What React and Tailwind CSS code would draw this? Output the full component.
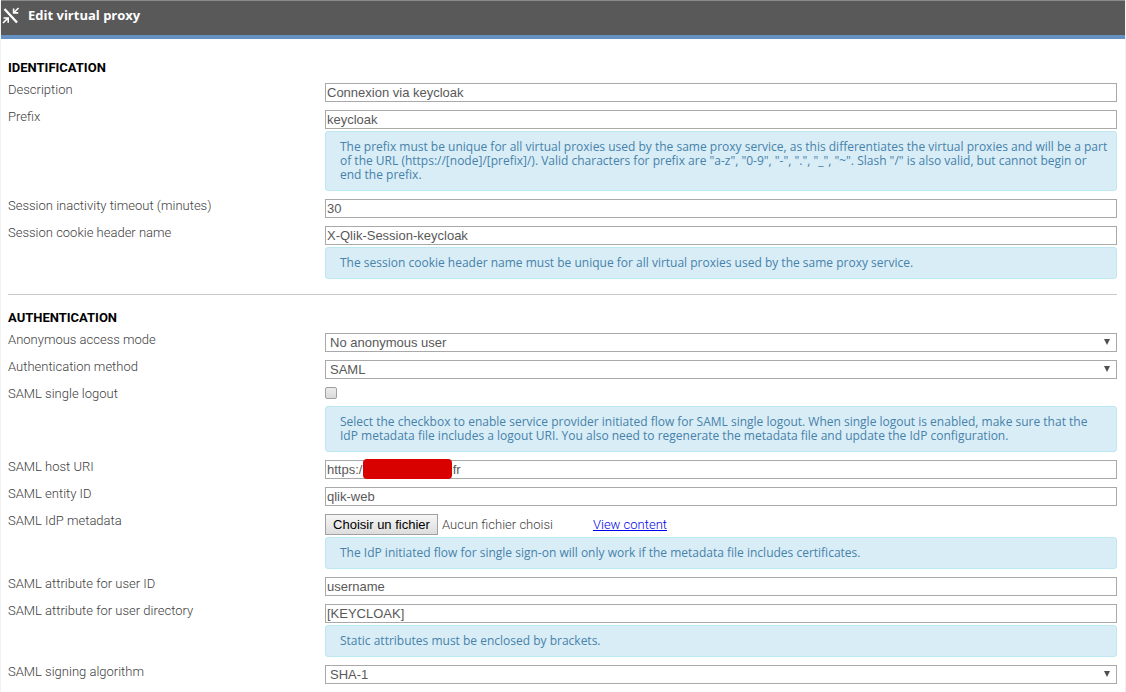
import { useState } from 'react';

const inputClass =
    "block w-full h-[19px] px-px border border-[#a9a9a9] bg-white font-['Liberation_Sans',Arial,sans-serif] text-[13px] leading-[17px] text-[#595959]";

const CollapseIcon = () => (
    <svg viewBox="0 0 18 18" className="w-[18px] h-[18px] shrink-0" fill="none" stroke="white" aria-hidden="true">
        <path d="M2.5 2 L15 15.5" strokeWidth="2.4" />
        <path d="M16.5 1 L12.5 5 M11.6 1.5 V5.9 H16.2" strokeWidth="1.6" />
        <path d="M1 16 L5.5 11.5 M1.5 11 H6.2 V15.8" strokeWidth="1.6" />
    </svg>
);

const Help = ({ children }) => (
    <p className="mt-0.5 pl-3.5 pr-2 py-2 border border-[#bce8f1] rounded-[3px] bg-[#d9edf7] font-['Open_Sans',sans-serif] text-[12px] font-normal leading-[14px] text-[#4682a9]">
        {children}
    </p>
);

const Row = ({ id, label, help, children }) => (
    <div className="flex items-start">
        <label htmlFor={id} className="w-[317px] shrink-0 leading-[14px]">{label}</label>
        <div className="grow min-w-0">
            {children}
            {help && <Help>{help}</Help>}
        </div>
    </div>
);

const TextField = ({ id, label, value, help }) => (
    <Row id={id} label={label} help={help}>
        <input id={id} type="text" defaultValue={value} className={inputClass} />
    </Row>
);

const SelectField = ({ id, label, options }) => (
    <Row id={id} label={label}>
        <div className="relative">
            <select
                id={id}
                className="block w-full h-[19px] pl-1 pr-6 appearance-none border border-[#a9a9a9] bg-white font-['Liberation_Sans',Arial,sans-serif] text-[13px] leading-[17px] text-[#595959]"
            >
                {options.map((option) => (
                    <option key={option}>{option}</option>
                ))}
            </select>
            <svg viewBox="0 0 6 6" className="absolute right-[7px] top-1.5 w-1.5 h-1.5 pointer-events-none" fill="#505050" aria-hidden="true">
                <path d="M0 0 H6 L3 6 Z" />
            </svg>
        </div>
    </Row>
);

const Section = ({ title, children }) => (
    <section>
        <h2 className="mb-2 text-[13px] leading-[14px] font-bold text-black uppercase">{title}</h2>
        <div className="flex flex-col gap-2">{children}</div>
    </section>
);

const App = () => {
    const [logout, setLogout] = useState(false);

    return (
        <div className="min-h-screen bg-white border-x border-[#f2f2f2] font-[Roboto,sans-serif] text-[13px] font-light text-[#404040]">
            <header className="flex items-center gap-2 h-[39px] pl-px border-t border-t-[#8c8c8c] border-b-4 border-b-[#6490c2] bg-[#595959] text-white">
                <button type="button" aria-label="Collapse" className="flex items-center pb-1">
                    <CollapseIcon />
                </button>
                <h1 className="pb-1 font-['Open_Sans',sans-serif] text-[13px] font-bold">Edit virtual proxy</h1>
            </header>

            <form className="pl-[7px] pr-2 pt-[22px] pb-2">
                <Section title="Identification">
                    <TextField id="description" label="Description" value="Connexion via keycloak" />
                    <TextField
                        id="prefix"
                        label="Prefix"
                        value="keycloak"
                        help={'The prefix must be unique for all virtual proxies used by the same proxy service, as this differentiates the virtual proxies and will be a part of the URL (https://[node]/[prefix]/). Valid characters for prefix are "a-z", "0-9", "-", ".", "_", "~". Slash "/" is also valid, but cannot begin or end the prefix.'}
                    />
                    <TextField id="timeout" label="Session inactivity timeout (minutes)" value="30" />
                    <TextField
                        id="cookie"
                        label="Session cookie header name"
                        value="X-Qlik-Session-keycloak"
                        help="The session cookie header name must be unique for all virtual proxies used by the same proxy service."
                    />
                </Section>

                <hr className="mt-[15px] mb-4 border-[#c8c8c8]" />

                <Section title="Authentication">
                    <SelectField id="anonymous" label="Anonymous access mode" options={['No anonymous user']} />
                    <SelectField id="method" label="Authentication method" options={['SAML']} />
                    <Row
                        id="logout"
                        label="SAML single logout"
                        help="Select the checkbox to enable service provider initiated flow for SAML single logout. When single logout is enabled, make sure that the IdP metadata file includes a logout URI. You also need to regenerate the metadata file and update the IdP configuration."
                    >
                        <div className="h-[17px]">
                            <input
                                id="logout"
                                type="checkbox"
                                checked={logout}
                                onChange={(e) => setLogout(e.target.checked)}
                                className="block w-3 h-3 appearance-none border border-[#a0a0a0] rounded-[2px] bg-linear-to-b from-[#ececec] to-[#dadada] checked:bg-[#595959]"
                            />
                        </div>
                    </Row>
                    <Row id="host" label="SAML host URI">
                        <div className="relative">
                            <input id="host" type="text" defaultValue={'https:/' + ' '.repeat(25) + 'fr'} className={inputClass} />
                            <span className="absolute left-[38px] -top-px w-[89px] h-5 rounded-[4px] bg-[#d90000]"></span>
                        </div>
                    </Row>
                    <TextField id="entity" label="SAML entity ID" value="qlik-web" />
                    <Row
                        id="metadata"
                        label="SAML IdP metadata"
                        help="The IdP initiated flow for single sign-on will only work if the metadata file includes certificates."
                    >
                        <div className="flex items-center h-[21px]">
                            <input id="metadata" type="file" className="hidden" />
                            <button
                                type="button"
                                onClick={() => document.getElementById('metadata').click()}
                                className="w-[113px] h-[21px] border border-[#a0a0a0] bg-linear-to-b from-[#f6f6f6] to-[#dddddd] font-['Liberation_Sans',Arial,sans-serif] text-[13px] leading-[19px] text-black"
                            >
                                Choisir un fichier
                            </button>
                            <span className="ml-1">Aucun fichier choisi</span>
                            <a href="#content" className="ml-10 text-[#0000ee] underline">View content</a>
                        </div>
                    </Row>
                    <TextField id="userid" label="SAML attribute for user ID" value="username" />
                    <TextField
                        id="directory"
                        label="SAML attribute for user directory"
                        value="[KEYCLOAK]"
                        help="Static attributes must be enclosed by brackets."
                    />
                    <SelectField id="algorithm" label="SAML signing algorithm" options={['SHA-1']} />
                </Section>
            </form>
        </div>
    );
};

export default App;
